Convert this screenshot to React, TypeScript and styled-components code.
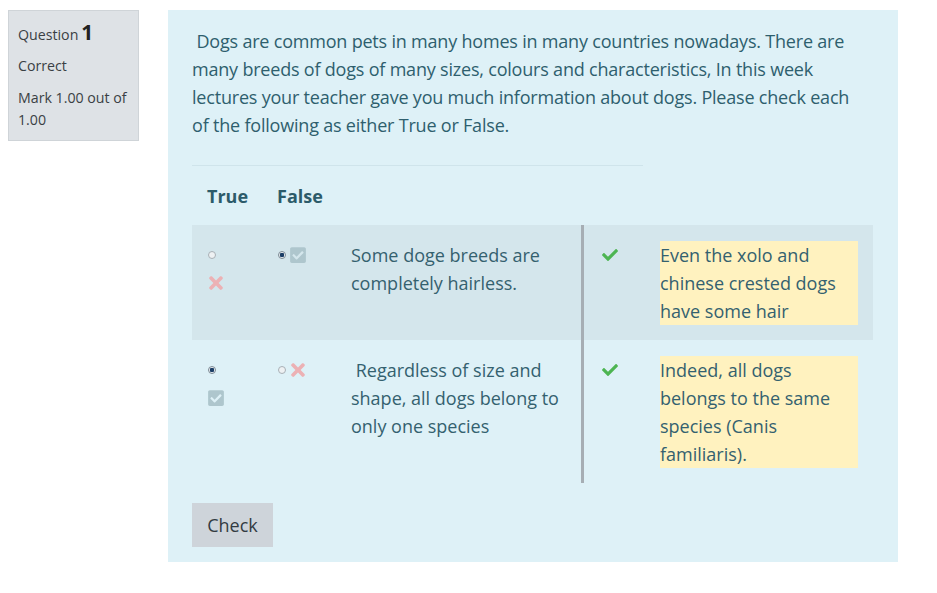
import React from "react";
import styled, { createGlobalStyle } from "styled-components";
import { FaCheck, FaTimes, FaCheckSquare } from "react-icons/fa";

const Global = createGlobalStyle`
  html, body { margin: 0; padding: 0; background: #ffffff; }
  body { font-family: "Open Sans", "Noto Sans", sans-serif; }
`;

const Page = styled.div`
  display: flex;
  align-items: flex-start;
  gap: 29px;
  padding: 10px 8px;
`;

const Info = styled.div`
  background: #dee2e6;
  border: 1px solid #cfd4d8;
  padding: 10px 9px 8px;
  box-sizing: border-box;
  width: 131px;
  height: 131px;
  color: #3a3f44;
  font-size: 14.2px;
  line-height: 22px;
`;

const InfoLine = styled.div<{ $gap?: number }>`
  margin-top: ${(p) => p.$gap ?? 0}px;
`;

const QNum = styled.span`
  font-size: 21px;
  font-weight: 700;
  margin-left: 3px;
  color: #222;
`;

const Panel = styled.div`
  width: 730px;
  height: 552px;
  box-sizing: border-box;
  background: #def1f7;
  padding: 17px 25px 15px 24px;
  color: #2e5f6e;
  display: flex;
  flex-direction: column;
`;

const Intro = styled.p`
  margin: 0;
  font-size: 18px;
  line-height: 28px;
  letter-spacing: -0.2px;
  padding-right: 6px;
`;

const Separator = styled.div`
  width: 451px;
  height: 1px;
  background: #cfe4eb;
  margin-top: 26px;
`;

const Grid = styled.div`
  display: grid;
  grid-template-columns: 70px 73px 246px 292px;
`;

const HeadCell = styled.div`
  height: 59px;
  display: flex;
  align-items: center;
  padding-left: 15px;
  font-size: 18px;
  font-weight: 700;
  color: #2c5b6a;
`;

const RowBg = styled.div<{ $shade: boolean }>`
  display: contents;
  & > * {
    background: ${(p) => (p.$shade ? "#d4e6ec" : "transparent")};
  }
`;

const ChoiceCell = styled.div<{ $stack: boolean }>`
  padding: 16px 0 15px 16px;
  display: flex;
  flex-direction: ${(p) => (p.$stack ? "column" : "row")};
  align-items: flex-start;
  gap: 4px;
  row-gap: 0;
`;

const IconLine = styled.span`
  height: 28px;
  display: flex;
  align-items: center;
`;

const Radio = styled.span<{ $on: boolean }>`
  width: 8px;
  height: 8px;
  border-radius: 50%;
  box-sizing: border-box;
  border: 1px solid ${(p) => (p.$on ? "#7d8a94" : "#a8b0b6")};
  background: ${(p) =>
    p.$on ? "radial-gradient(circle, #1b3e66 0 2px, #e8eef2 2.5px)" : "#eef1f3"};
`;

const XIcon = styled(FaTimes)`
  color: #ecb1b4;
  width: 14px;
  height: 20px;
  margin-left: 1px;
`;

const BoxIcon = styled(FaCheckSquare)`
  color: #aec6cd;
  width: 16px;
  height: 18px;
`;

const Statement = styled.div`
  padding: 16px 10px 15px 16px;
  font-size: 18px;
  line-height: 28px;
  color: #34616f;
`;

const FeedbackCell = styled.div`
  border-left: 3px solid #a6aeb4;
  padding: 16px 15px 15px 17px;
  display: flex;
  align-items: flex-start;
  gap: 41px;
`;

const Tick = styled(FaCheck)`
  color: #4db552;
  width: 18px;
  height: 16px;
  margin-top: 6px;
  flex: none;
`;

const Feedback = styled.div`
  width: 200px;
  background: #fff2bf;
  font-size: 18px;
  line-height: 28px;
  color: #34616f;
`;

const CheckButton = styled.button`
  margin-top: 20px;
  align-self: flex-start;
  width: 81px;
  height: 44px;
  border: none;
  background: #ced4da;
  color: #333b42;
  font-family: "Open Sans", "Noto Sans", sans-serif;
  font-size: 18px;
  padding: 0;
`;

type Mark = "x" | "box" | null;
type Row = {
  trueOn: boolean;
  trueMark: Mark;
  falseMark: Mark;
  text: string;
  feedback: string;
};

const rows: Row[] = [
  {
    trueOn: false,
    trueMark: "x",
    falseMark: "box",
    text: "Some doge breeds are completely hairless.",
    feedback: "Even the xolo and chinese crested dogs have some hair",
  },
  {
    trueOn: true,
    trueMark: "box",
    falseMark: "x",
    text: "\u00a0Regardless of size and shape, all dogs belong to only one species",
    feedback: "Indeed, all dogs belongs to the same species (Canis familiaris).",
  },
];

const MarkIcon = ({ m }: { m: Mark }) =>
  m === "x" ? <XIcon /> : m === "box" ? <BoxIcon /> : null;

export default function App() {
  return (
    <>
      <Global />
      <Page>
        <Info>
          <InfoLine>
            Question<QNum>1</QNum>
          </InfoLine>
          <InfoLine $gap={9}>Correct</InfoLine>
          <InfoLine $gap={10}>Mark 1.00 out of 1.00</InfoLine>
        </Info>
        <Panel>
          <Intro>
            &nbsp;Dogs are common pets in many homes in many countries nowadays. There are
            many breeds of dogs of many sizes, colours and characteristics, In this week
            lectures your teacher gave you much information about dogs. Please check each
            of the following as either True or False.
          </Intro>
          <Separator />
          <Grid>
            <HeadCell>True</HeadCell>
            <HeadCell>False</HeadCell>
            <div />
            <div />
            {rows.map((r, i) => (
              <RowBg key={i} $shade={i === 0}>
                <ChoiceCell $stack>
                  <IconLine>
                    <Radio $on={r.trueOn} />
                  </IconLine>
                  <IconLine>
                    <MarkIcon m={r.trueMark} />
                  </IconLine>
                </ChoiceCell>
                <ChoiceCell $stack={false}>
                  <IconLine>
                    <Radio $on={!r.trueOn} />
                  </IconLine>
                  <IconLine>
                    <MarkIcon m={r.falseMark} />
                  </IconLine>
                </ChoiceCell>
                <Statement>{r.text}</Statement>
                <FeedbackCell>
                  <Tick />
                  <Feedback>{r.feedback}</Feedback>
                </FeedbackCell>
              </RowBg>
            ))}
          </Grid>
          <CheckButton>Check</CheckButton>
        </Panel>
      </Page>
    </>
  );
}
